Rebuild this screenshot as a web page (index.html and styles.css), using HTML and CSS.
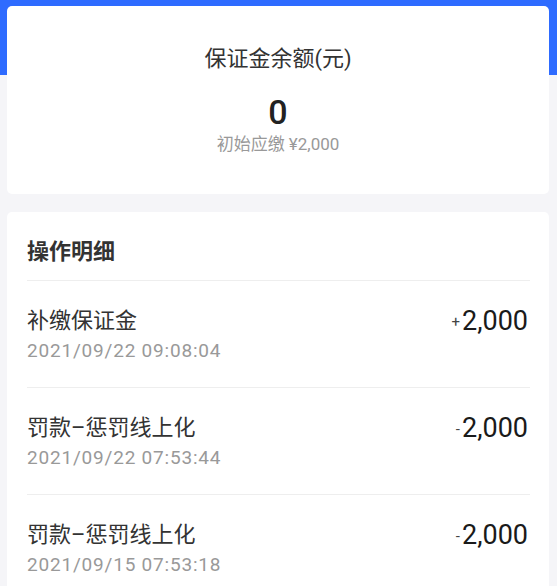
FILE: index.html
```html
<!DOCTYPE html>
<html lang="zh-CN">
<head>
<meta charset="utf-8">
<title>保证金</title>
<link rel="stylesheet" href="styles.css">
</head>
<body>
<div class="page">
  <section class="card summary">
    <div class="summary-title">保证金余额(元)</div>
    <div class="summary-value">0</div>
    <div class="summary-sub">初始应缴 ¥2,000</div>
  </section>

  <section class="card detail">
    <div class="detail-head">操作明细</div>
    <div class="row">
      <div class="row-main">
        <div class="row-title">补缴保证金</div>
        <div class="row-date">2021/09/22 09:08:04</div>
      </div>
      <div class="row-amount"><span class="sign">+</span>2,000</div>
    </div>
    <div class="row">
      <div class="row-main">
        <div class="row-title">罚款–惩罚线上化</div>
        <div class="row-date">2021/09/22 07:53:44</div>
      </div>
      <div class="row-amount"><span class="sign">-</span>2,000</div>
    </div>
    <div class="row">
      <div class="row-main">
        <div class="row-title">罚款–惩罚线上化</div>
        <div class="row-date">2021/09/15 07:53:18</div>
      </div>
      <div class="row-amount"><span class="sign">-</span>2,000</div>
    </div>
  </section>
</div>
</body>
</html>
```

FILE: styles.css
```css
html, body {
  margin: 0;
  padding: 0;
}
body {
  background: #f5f5f8;
  font-family: Roboto, "Noto Sans CJK SC", sans-serif;
  color: #333;
}
.page {
  background: linear-gradient(#2e6bff 0, #2e6bff 75px, #f5f5f8 75px);
  padding: 6px 8px 0 7px;
  display: flex;
  flex-direction: column;
  gap: 18px;
}
.card {
  background: #fff;
  border-radius: 5px;
}
.summary {
  height: 188px;
  box-sizing: border-box;
  padding-top: 40px;
  display: flex;
  flex-direction: column;
  align-items: center;
}
.summary-title {
  font-size: 22px;
  line-height: 26px;
  color: #333;
}
.summary-value {
  margin-top: 20px;
  font-size: 34px;
  line-height: 40px;
  font-weight: 500;
  color: #222;
}
.summary-sub {
  margin-top: 1px;
  font-size: 17px;
  line-height: 22px;
  color: #999;
}
.detail {
  padding: 0 19px 40px 20px;
}
.detail-head {
  padding: 26px 0 14px;
  font-size: 22px;
  line-height: 28px;
  font-weight: 600;
  color: #333;
  border-bottom: 1px solid #eeeeee;
}
.row {
  display: flex;
  justify-content: space-between;
  align-items: flex-start;
  padding: 26px 0 25px;
  border-bottom: 1px solid #eeeeee;
}
.row:last-child {
  border-bottom: none;
}
.row-title {
  font-size: 22px;
  line-height: 28px;
  color: #333;
}
.row-date {
  margin-top: 5px;
  font-size: 19px;
  line-height: 22px;
  letter-spacing: 0.8px;
  color: #999;
}
.row-amount {
  margin-right: 2px;
  font-size: 27px;
  line-height: 28px;
  color: #1a1a1a;
  display: flex;
  align-items: baseline;
}
.sign {
  font-size: 15px;
  margin-right: 2px;
  color: #444;
  position: relative;
  top: -3px;
}
```
